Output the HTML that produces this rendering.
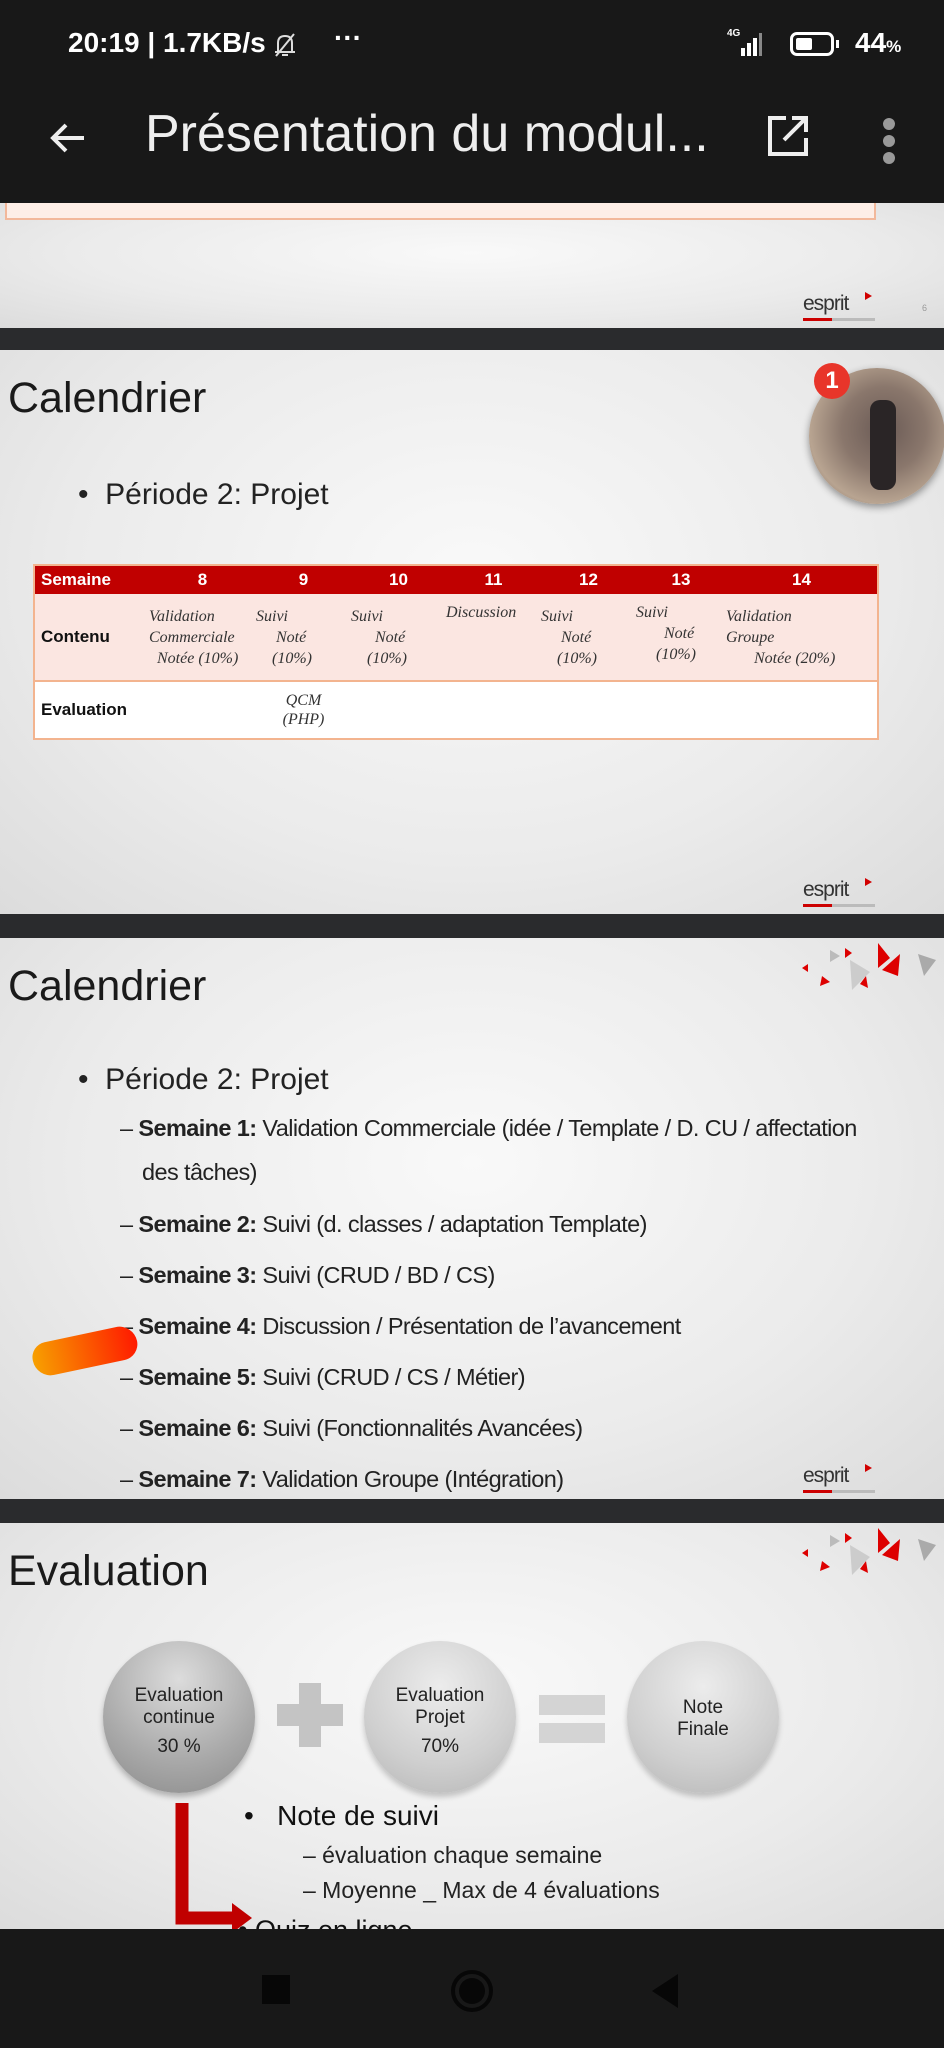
<!DOCTYPE html>
<html><head><meta charset="utf-8"><style>
*{margin:0;padding:0;box-sizing:border-box}
body{width:944px;height:2048px;background:#2a2b2d;position:relative;overflow:hidden;font-family:"Liberation Sans",sans-serif}
.a{position:absolute;white-space:nowrap}
.slide{position:absolute;left:0;width:944px;background:radial-gradient(ellipse at 50% 40%,#f9f9f9 0%,#ebebeb 60%,#dcdcdc 100%)}
.logo{position:absolute;font-family:"Liberation Sans",sans-serif;font-size:21px;color:#333;letter-spacing:-1px}
.logo i{position:absolute;left:62px;top:0;width:0;height:0;border-left:7px solid #d10000;border-top:4px solid transparent;border-bottom:4px solid transparent}
.logo b{position:absolute;left:0;top:26px;width:72px;height:3px;background:linear-gradient(90deg,#c00 40%,#bbb 40%)}
.h{font-size:43px;color:#1a1a1a}
.dash{font-size:23.5px;color:#222;letter-spacing:-0.6px}
.dash b{font-weight:bold}
td{font-family:"Liberation Serif",serif;font-style:italic;font-size:16px;color:#333;vertical-align:middle}
</style></head><body>
<div class="a" style="left:0;top:0;width:944px;height:203px;background:#181818"></div>
<div class="a" style="left:68px;top:27px;color:#fff;font-size:28px;font-weight:bold">20:19 | 1.7KB/s</div>
<svg class="a" style="left:270px;top:30px" width="30" height="30" viewBox="0 0 30 30"><path d="M8 22 L8 13 Q8 6 15 6 Q22 6 22 13 L22 22 Z M5 22 H25 M12 25 H18 M6 26 L24 4" stroke="#ddd" stroke-width="2" fill="none"/></svg>
<div class="a" style="left:334px;top:22px;color:#fff;font-size:28px;font-weight:bold">···</div>
<div class="a" style="left:727px;top:28px;color:#fff;font-size:10px;font-weight:bold">4G</div>
<svg class="a" style="left:727px;top:30px" width="50" height="28"><rect x="14" y="18" width="4" height="8" fill="#fff"/><rect x="20" y="13" width="4" height="13" fill="#fff"/><rect x="26" y="8" width="4" height="18" fill="#fff"/><rect x="32" y="3" width="3" height="23" fill="#888"/></svg>
<div class="a" style="left:790px;top:32px;width:44px;height:24px;border:3px solid #fff;border-radius:7px"><div style="margin:3px;width:16px;height:12px;background:#fff;border-radius:2px"></div></div>
<div class="a" style="left:836px;top:40px;width:3px;height:8px;background:#fff"></div>
<div class="a" style="left:855px;top:27px;color:#fff;font-size:28px;font-weight:bold">44<span style="font-size:17px">%</span></div>
<svg class="a" style="left:44px;top:114px" width="48" height="48" viewBox="0 0 48 48"><path d="M40 24 H10 M22 11 L9 24 L22 37" stroke="#eee" stroke-width="4" fill="none"/></svg>
<div class="a" style="left:145px;top:104px;color:#eee;font-size:52px">Présentation du modul...</div>
<svg class="a" style="left:766px;top:114px" width="44" height="44" viewBox="0 0 44 44"><path d="M20 4 H4 V40 H40 V24 M26 4 H40 V18 M40 4 L18 26" stroke="#eee" stroke-width="4" fill="none"/></svg>
<div class="a" style="left:883px;top:118px;width:12px;height:12px;border-radius:6px;background:#999"></div>
<div class="a" style="left:883px;top:135px;width:12px;height:12px;border-radius:6px;background:#999"></div>
<div class="a" style="left:883px;top:152px;width:12px;height:12px;border-radius:6px;background:#999"></div>

<div class="slide" style="top:203px;height:125px">
<div class="a" style="left:5px;top:0;width:871px;height:17px;border:2px solid #f2b89b;border-top:none;background:#fdeee7"></div>
<div class="logo" style="left:803px;top:89px">esprit<i></i><b></b></div>
<div class="a" style="left:922px;top:100px;font-size:9px;color:#999">6</div>
</div>

<div class="slide" style="top:350px;height:564px">
<div class="a h" style="left:8px;top:24px">Calendrier</div>
<div class="a" style="left:78px;top:128px;font-size:30px;color:#222">•&nbsp;&nbsp;Période 2: Projet</div>
<table class="a" style="left:33px;top:214px;width:846px;border-collapse:collapse;border:2px solid #f3b48f">
<tr style="background:#c00000;height:29px"><td style="font-family:'Liberation Sans',sans-serif;font-style:normal;font-weight:bold;color:#fff;font-size:17px;padding-left:6px;width:115px">Semaine</td>
<td style="font-family:'Liberation Sans';font-style:normal;font-weight:bold;color:#fff;font-size:17px;text-align:center;width:107px">8</td>
<td style="font-family:'Liberation Sans';font-style:normal;font-weight:bold;color:#fff;font-size:17px;text-align:center;width:95px">9</td>
<td style="font-family:'Liberation Sans';font-style:normal;font-weight:bold;color:#fff;font-size:17px;text-align:center;width:95px">10</td>
<td style="font-family:'Liberation Sans';font-style:normal;font-weight:bold;color:#fff;font-size:17px;text-align:center;width:95px">11</td>
<td style="font-family:'Liberation Sans';font-style:normal;font-weight:bold;color:#fff;font-size:17px;text-align:center;width:95px">12</td>
<td style="font-family:'Liberation Sans';font-style:normal;font-weight:bold;color:#fff;font-size:17px;text-align:center;width:90px">13</td>
<td style="font-family:'Liberation Sans';font-style:normal;font-weight:bold;color:#fff;font-size:17px;text-align:center">14</td></tr>
<tr style="background:#fbe6e1;height:87px;border-bottom:2px solid #f3b48f"><td style="font-family:'Liberation Sans';font-style:normal;font-weight:bold;color:#111;font-size:17px;padding-left:6px">Contenu</td>
<td style="line-height:21px">Validation<br>Commerciale<br>&nbsp;&nbsp;Notée (10%)</td>
<td style="line-height:21px">Suivi<br>&nbsp;&nbsp;&nbsp;&nbsp;&nbsp;Noté<br>&nbsp;&nbsp;&nbsp;&nbsp;(10%)</td>
<td style="line-height:21px">Suivi<br>&nbsp;&nbsp;&nbsp;&nbsp;&nbsp;&nbsp;Noté<br>&nbsp;&nbsp;&nbsp;&nbsp;(10%)</td>
<td style="line-height:21px;vertical-align:top;padding-top:8px">Discussion</td>
<td style="line-height:21px">Suivi<br>&nbsp;&nbsp;&nbsp;&nbsp;&nbsp;Noté<br>&nbsp;&nbsp;&nbsp;&nbsp;(10%)</td>
<td style="line-height:21px;vertical-align:top;padding-top:8px">Suivi<br>&nbsp;&nbsp;&nbsp;&nbsp;&nbsp;&nbsp;&nbsp;Noté<br>&nbsp;&nbsp;&nbsp;&nbsp;&nbsp;(10%)</td>
<td style="line-height:21px">Validation<br>Groupe<br>&nbsp;&nbsp;&nbsp;&nbsp;&nbsp;&nbsp;&nbsp;Notée (20%)</td></tr>
<tr style="background:#fff;height:58px"><td style="font-family:'Liberation Sans';font-style:normal;font-weight:bold;color:#111;font-size:17px;padding-left:6px">Evaluation</td><td></td>
<td style="line-height:19px;text-align:center">QCM<br>(PHP)</td><td></td><td></td><td></td><td></td><td></td></tr>
</table>
<div class="logo" style="left:803px;top:528px">esprit<i></i><b></b></div>
<div class="a" style="left:809px;top:18px;width:136px;height:136px;border-radius:68px;background:radial-gradient(circle at 55% 45%,#6a5a55 0%,#8a776c 40%,#b8a491 70%,#6b5b52 100%);box-shadow:0 3px 8px rgba(0,0,0,.4)"></div>
<div class="a" style="left:870px;top:50px;width:26px;height:90px;background:#2a2526;border-radius:10px"></div>
<div class="a" style="left:814px;top:13px;width:36px;height:36px;border-radius:18px;background:#e8352a;color:#fff;font-weight:bold;font-size:24px;text-align:center;line-height:36px">1</div>
</div>

<div class="slide" style="top:938px;height:561px">
<svg class="a" style="left:790px;top:2px" width="154" height="70"><polygon points="40,10 50,16 40,22" fill="#bbb"/><polygon points="55,8 62,13 55,18" fill="#d00"/><polygon points="88,3 100,18 88,28" fill="#d00"/><polygon points="110,14 108,36 92,30" fill="#d00"/><polygon points="128,14 146,20 134,36" fill="#aaa"/><polygon points="12,28 18,24 18,32" fill="#d00"/><polygon points="32,36 40,42 30,46" fill="#d00"/><polygon points="70,44 76,36 78,48" fill="#d00"/><polygon points="60,20 80,32 62,50" fill="#ccc"/></svg>
<div class="a h" style="left:8px;top:24px">Calendrier</div>
<div class="a" style="left:78px;top:125px;font-size:30px;color:#222">•&nbsp;&nbsp;Période 2: Projet</div>
<div class="a dash" style="left:120px;top:177px">– <b>Semaine 1:</b> Validation Commerciale (idée / Template / D. CU / affectation</div>
<div class="a dash" style="left:142px;top:221px">des tâches)</div>
<div class="a dash" style="left:120px;top:273px">– <b>Semaine 2:</b> Suivi (d. classes / adaptation Template)</div>
<div class="a dash" style="left:120px;top:324px">– <b>Semaine 3:</b> Suivi (CRUD / BD / CS)</div>
<div class="a dash" style="left:120px;top:375px">– <b>Semaine 4:</b> Discussion / Présentation de l’avancement</div>
<div class="a dash" style="left:120px;top:426px">– <b>Semaine 5:</b> Suivi (CRUD / CS / Métier)</div>
<div class="a dash" style="left:120px;top:477px">– <b>Semaine 6:</b> Suivi (Fonctionnalités Avancées)</div>
<div class="a dash" style="left:120px;top:528px">– <b>Semaine 7:</b> Validation Groupe (Intégration)</div>
<div class="a" style="left:32px;top:396px;width:106px;height:34px;border-radius:17px 20px 18px 20px;background:linear-gradient(90deg,#f7a000,#ff1a00);transform:rotate(-12deg)"></div>
<div class="logo" style="left:803px;top:526px">esprit<i></i><b></b></div>
</div>

<div class="slide" style="top:1523px;height:406px">
<svg class="a" style="left:790px;top:2px" width="154" height="70"><polygon points="40,10 50,16 40,22" fill="#bbb"/><polygon points="55,8 62,13 55,18" fill="#d00"/><polygon points="88,3 100,18 88,28" fill="#d00"/><polygon points="110,14 108,36 92,30" fill="#d00"/><polygon points="128,14 146,20 134,36" fill="#aaa"/><polygon points="12,28 18,24 18,32" fill="#d00"/><polygon points="32,36 40,42 30,46" fill="#d00"/><polygon points="70,44 76,36 78,48" fill="#d00"/><polygon points="60,20 80,32 62,50" fill="#ccc"/></svg>
<div class="a h" style="left:8px;top:24px">Evaluation</div>
<div class="a" style="left:103px;top:118px;width:152px;height:152px;border-radius:76px;background:radial-gradient(circle at 50% 25%,#dcdcdc,#a9a9a9 60%,#8a8a8a);box-shadow:0 4px 6px rgba(0,0,0,.25);text-align:center;font-size:19px;color:#222;padding-top:44px;line-height:22px">Evaluation<br>continue<br><span style="line-height:36px">30 %</span></div>
<div class="a" style="left:364px;top:118px;width:152px;height:152px;border-radius:76px;background:radial-gradient(circle at 50% 30%,#ececec,#cfcfcf 60%,#b5b5b5);box-shadow:0 4px 6px rgba(0,0,0,.2);text-align:center;font-size:19px;color:#222;padding-top:44px;line-height:22px">Evaluation<br>Projet<br><span style="line-height:36px">70%</span></div>
<div class="a" style="left:627px;top:118px;width:152px;height:152px;border-radius:76px;background:radial-gradient(circle at 50% 30%,#ececec,#cfcfcf 60%,#b5b5b5);box-shadow:0 4px 6px rgba(0,0,0,.2);text-align:center;font-size:19px;color:#222;padding-top:56px;line-height:22px">Note<br>Finale</div>
<div class="a" style="left:277px;top:181px;width:66px;height:22px;background:#c4c4c4"></div>
<div class="a" style="left:299px;top:160px;width:22px;height:64px;background:#c4c4c4"></div>
<div class="a" style="left:539px;top:172px;width:66px;height:20px;background:#d4d4d4"></div>
<div class="a" style="left:539px;top:200px;width:66px;height:20px;background:#d4d4d4"></div>
<svg class="a" style="left:160px;top:280px" width="100" height="130"><path d="M22 0 V115 H75" stroke="#c00000" stroke-width="13" fill="none"/><polygon points="72,100 92,115 72,130" fill="#c00000"/></svg>
<div class="a" style="left:244px;top:277px;font-size:28px;color:#111">•&nbsp;&nbsp;&nbsp;Note de suivi</div>
<div class="a" style="left:303px;top:319px;font-size:23px;color:#222">– évaluation chaque semaine</div>
<div class="a" style="left:303px;top:354px;font-size:23px;color:#222">– Moyenne _ Max de 4 évaluations</div>
<div class="a" style="left:238px;top:392px;font-size:27px;color:#111">•&nbsp;Quiz en ligne</div>
</div>

<div class="a" style="left:0;top:1929px;width:944px;height:119px;background:#181818"></div>
<div class="a" style="left:262px;top:1975px;width:28px;height:29px;background:#070707"></div>
<div class="a" style="left:451px;top:1970px;width:42px;height:42px;border-radius:21px;border:4px solid #070707;background:#181818"><div style="margin:4px;width:26px;height:26px;border-radius:13px;background:#070707"></div></div>
<svg class="a" style="left:650px;top:1972px" width="30" height="38"><polygon points="28,2 28,36 2,19" fill="#070707"/></svg>
</body></html>
